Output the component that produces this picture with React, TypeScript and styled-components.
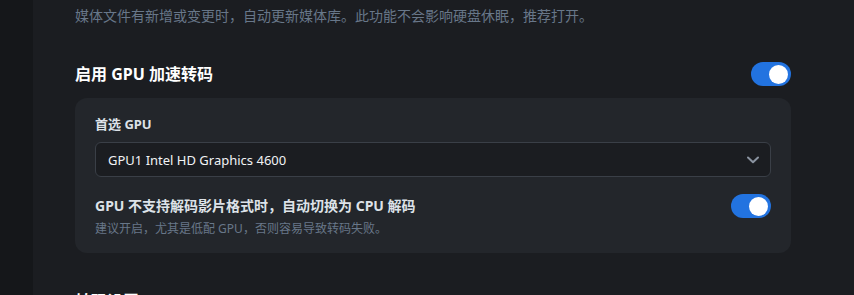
import React from "react";
import styled, { createGlobalStyle } from "styled-components";

const Global = createGlobalStyle`
  html, body { margin: 0; padding: 0; background: #1b1d21; }
  body { font-family: "Segoe UI", "Noto Sans", "Noto Sans CJK SC", sans-serif; overflow: hidden; }
  * { box-sizing: border-box; }
`;

const Shell = styled.div`
  display: flex;
  width: 854px;
  height: 295px;
  overflow: hidden;
`;

const Sidebar = styled.div`
  width: 33px;
  flex: none;
  background: #15171a;
`;

const Main = styled.main`
  flex: 1;
  background: #1b1d21;
  padding: 6px 63px 0 42px;
  display: flex;
  flex-direction: column;
`;

const Hint = styled.p<{ $size?: number }>`
  margin: 0;
  font-size: ${(p) => p.$size ?? 14}px;
  line-height: ${(p) => (p.$size ?? 14) + 6}px;
  color: #687789;
`;

const SectionHead = styled.div<{ $top: number }>`
  display: flex;
  align-items: center;
  justify-content: space-between;
  height: 24px;
  margin-top: ${(p) => p.$top}px;
`;

const Title = styled.h2`
  margin: 0;
  font-size: 16px;
  font-weight: 700;
  color: #ffffff;
  line-height: 24px;
`;

const Card = styled.div`
  margin-top: 12px;
  background: #23262b;
  border-radius: 12px;
  padding: 16px 20px 15px;
  display: flex;
  flex-direction: column;
`;

const Label = styled.div`
  font-size: 13px;
  font-weight: 700;
  color: #dde2e8;
  line-height: 20px;
`;

const SelectBox = styled.div`
  margin-top: 8px;
  height: 35px;
  border: 1px solid #3a3f47;
  border-radius: 6px;
  background: #1b1d21;
  display: flex;
  align-items: center;
  justify-content: space-between;
  padding: 0 11px 0 12px;
  color: #f1f3f5;
  font-size: 13px;
`;

const Row = styled.div`
  margin-top: 17px;
  display: flex;
  align-items: flex-start;
  justify-content: space-between;
`;

const RowText = styled.div`
  display: flex;
  flex-direction: column;
  gap: 2px;
`;

const RowTitle = styled.div`
  font-size: 14px;
  font-weight: 700;
  color: #dde2e8;
  line-height: 24px;
`;

const Track = styled.div<{ $on: boolean }>`
  width: 40px;
  height: 24px;
  border-radius: 12px;
  background: ${(p) => (p.$on ? "#2273e0" : "#3a3f47")};
  display: flex;
  align-items: center;
  justify-content: ${(p) => (p.$on ? "flex-end" : "flex-start")};
  padding: 0 3px;
  flex: none;
`;

const Knob = styled.div`
  width: 19px;
  height: 19px;
  border-radius: 50%;
  background: #ffffff;
`;

const Toggle = ({ on }: { on: boolean }) => (
  <Track $on={on}>
    <Knob />
  </Track>
);

const Chevron = () => (
  <svg width="12" height="8" viewBox="0 0 12 8" fill="none">
    <path d="M1 1.5 L6 6.2 L11 1.5" stroke="#8a93a0" strokeWidth="2" strokeLinecap="round" strokeLinejoin="round" />
  </svg>
);

export default function App() {
  return (
    <Shell>
      <Global />
      <Sidebar />
      <Main>
        <Hint>媒体文件有新增或变更时，自动更新媒体库。此功能不会影响硬盘休眠，推荐打开。</Hint>
        <SectionHead $top={36}>
          <Title>启用 GPU 加速转码</Title>
          <Toggle on />
        </SectionHead>
        <Card>
          <Label>首选 GPU</Label>
          <SelectBox>
            <span>GPU1 Intel HD Graphics 4600</span>
            <Chevron />
          </SelectBox>
          <Row>
            <RowText>
              <RowTitle>GPU 不支持解码影片格式时，自动切换为 CPU 解码</RowTitle>
              <Hint $size={12}>建议开启，尤其是低配 GPU，否则容易导致转码失败。</Hint>
            </RowText>
            <Toggle on />
          </Row>
        </Card>
        <SectionHead $top={36}>
          <Title>转码设置</Title>
        </SectionHead>
      </Main>
    </Shell>
  );
}
